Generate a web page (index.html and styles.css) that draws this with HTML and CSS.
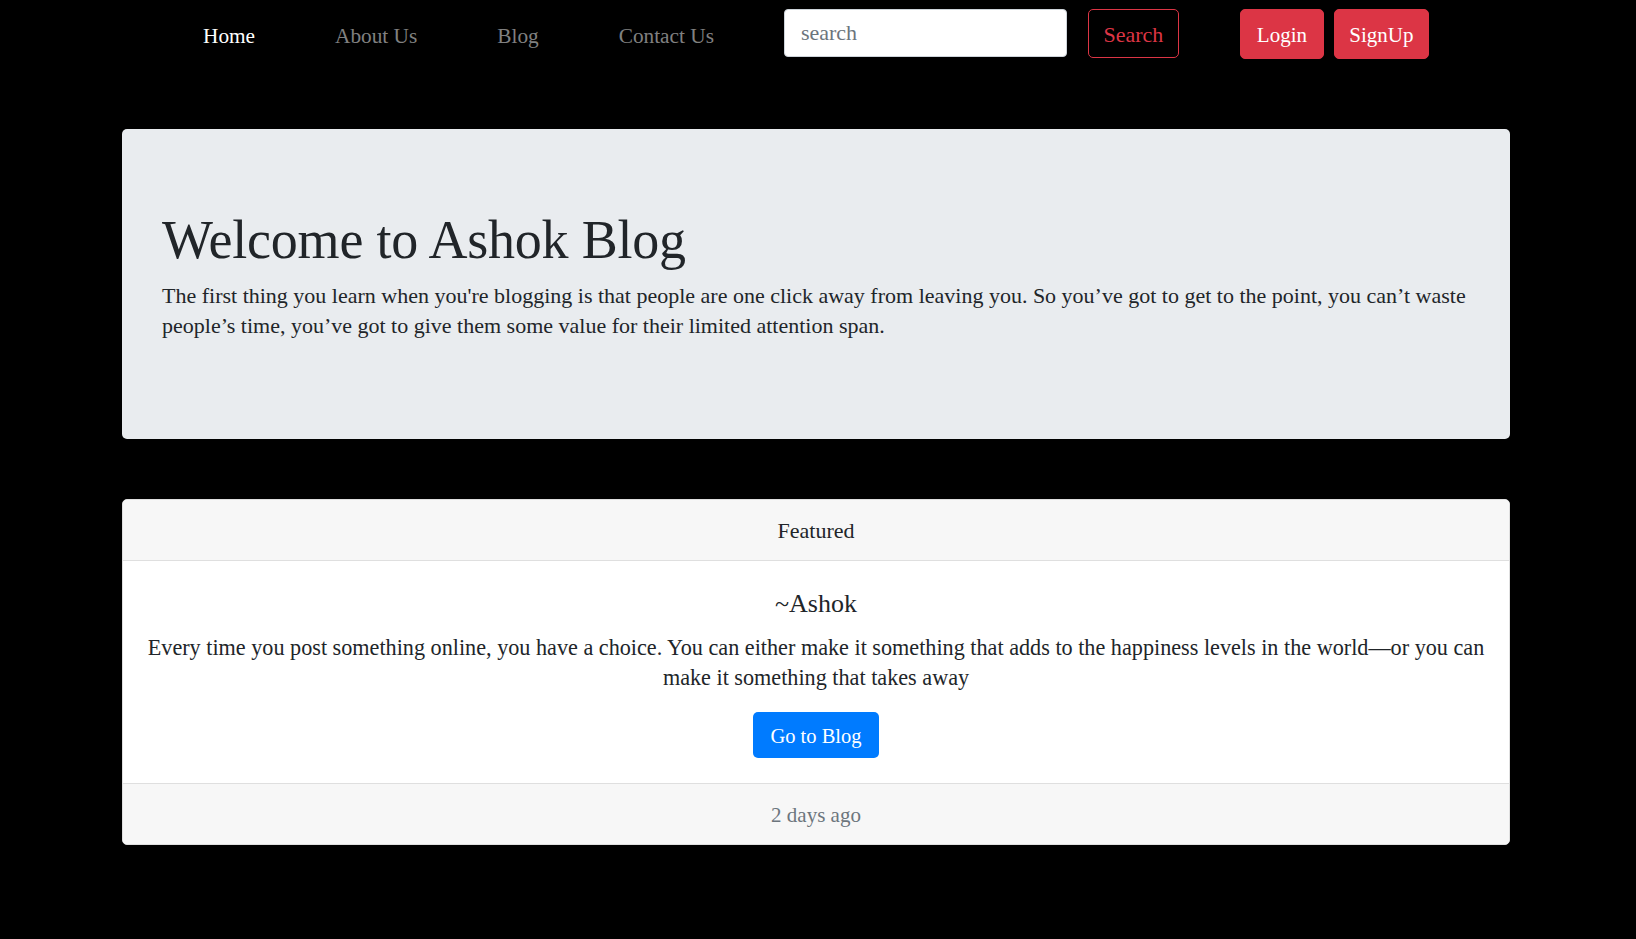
FILE: index.html
```html
<!DOCTYPE html>
<html lang="en">
<head>
<meta charset="utf-8">
<title>Ashok Blog</title>
<link rel="stylesheet" href="styles.css">
</head>
<body>
<nav class="navbar">
  <ul class="nav-links">
    <li><a class="nav-link active" href="#">Home</a></li>
    <li><a class="nav-link" href="#">About Us</a></li>
    <li><a class="nav-link" href="#">Blog</a></li>
    <li><a class="nav-link" href="#">Contact Us</a></li>
  </ul>
  <form class="search-form">
    <input class="search-input" type="search" placeholder="search">
    <button class="btn btn-outline" type="button">Search</button>
  </form>
  <div class="auth">
    <button class="btn btn-danger btn-login" type="button">Login</button>
    <button class="btn btn-danger btn-signup" type="button">SignUp</button>
  </div>
</nav>

<main class="page">
  <section class="jumbotron">
    <h1 class="display">Welcome to Ashok Blog</h1>
    <p class="lead">The first thing you learn when you're blogging is that people are one click away from leaving you. So you’ve got to get to the point, you can’t waste people’s time, you’ve got to give them some value for their limited attention span.</p>
  </section>

  <section class="card">
    <div class="card-header">Featured</div>
    <div class="card-body">
      <h5 class="card-title">~Ashok</h5>
      <p class="card-text">Every time you post something online, you have a choice. You can either make it something that adds to the happiness levels in the world—or you can make it something that takes away</p>
      <a href="#" class="btn-primary">Go to Blog</a>
    </div>
    <div class="card-footer">2 days ago</div>
  </section>
</main>
</body>
</html>
```

FILE: styles.css
```css
* { box-sizing: border-box; }

html, body {
  margin: 0;
  padding: 0;
  background: #000;
}

body {
  font-family: "Liberation Serif", "Times New Roman", serif;
  color: #212529;
  height: 939px;
  overflow: hidden;
}

/* ---------- navbar ---------- */
.navbar {
  display: flex;
  align-items: flex-start;
  padding: 9px 0 0 203px;
  height: 129px;
}

.nav-links {
  display: flex;
  gap: 80px;
  list-style: none;
  margin: 0;
  padding: 0;
}

.nav-link {
  display: block;
  font-size: 21.3px;
  line-height: 50px;
  padding-top: 2px;
  color: #808080;
  text-decoration: none;
}

.nav-link.active { color: #fff; }

.search-form {
  display: flex;
  align-items: flex-start;
  margin-left: 70px;
}

.search-input {
  width: 283px;
  height: 48px;
  border: 1px solid #ced4da;
  border-radius: 4px;
  background: #fff;
  padding: 0 16px;
  font-family: "Liberation Serif", serif;
  font-size: 22px;
  color: #495057;
  outline: none;
}

.search-input::placeholder { color: #6c757d; }

.btn {
  font-family: "Liberation Serif", serif;
  font-size: 21px;
  height: 50px;
  border-radius: 5px;
  padding: 3px 0 0;
  cursor: pointer;
  text-align: center;
}

.btn-outline {
  width: 91px;
  margin-left: 21px;
  height: 49px;
  background: transparent;
  color: #dc3545;
  border: 1px solid #dc3545;
  font-size: 22px;
}

.auth {
  display: flex;
  gap: 10px;
  margin-left: 61px;
}

.btn-danger {
  background: #dc3545;
  border: 1px solid #dc3545;
  color: #fff;
}

.btn-login { width: 84px; }
.btn-signup { width: 95px; }

/* ---------- page ---------- */
.page {
  padding: 0 126px 0 122px;
}

.jumbotron {
  background: #e9ecef;
  border-radius: 5px;
  padding: 78px 20px 98px 40px;
}

.display {
  margin: 0 0 8px;
  font-size: 54px;
  line-height: 66px;
  font-weight: 400;
  letter-spacing: -0.2px;
  color: #212529;
}

.lead {
  margin: 0;
  font-size: 22px;
  line-height: 30px;
  color: #212529;
}

/* ---------- card ---------- */
.card {
  margin-top: 60px;
  background: #fff;
  border: 1px solid #dfdfdf;
  border-radius: 5px;
  text-align: center;
  overflow: hidden;
}

.card-header {
  height: 61px;
  line-height: 60px;
  padding-top: 1px;
  background: #f7f7f7;
  border-bottom: 1px solid #dfdfdf;
  font-size: 22px;
}

.card-body {
  padding: 27px 10px 25px;
}

.card-title {
  margin: 0 0 14px;
  font-size: 26px;
  line-height: 31px;
  font-weight: 400;
}

.card-text {
  margin: 0 0 19px;
  font-size: 22.2px;
  line-height: 30px;
}

.btn-primary {
  display: inline-block;
  height: 46px;
  line-height: 46px;
  padding: 1px 17px 0;
  background: #007bff;
  color: #fff;
  border-radius: 5px;
  font-size: 20.5px;
  text-decoration: none;
}

.card-footer {
  height: 61px;
  line-height: 60px;
  padding-top: 1px;
  background: #f7f7f7;
  border-top: 1px solid #dfdfdf;
  color: #6c757d;
  font-size: 21px;
}
```
